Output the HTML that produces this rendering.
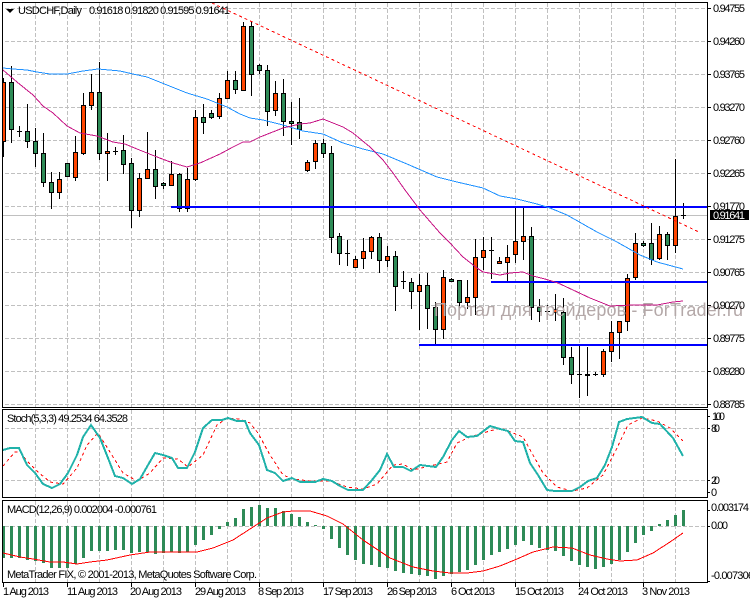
<!DOCTYPE html>
<html><head><meta charset="utf-8"><title>USDCHF,Daily</title>
<style>
html,body{margin:0;padding:0;background:#fff;width:750px;height:600px;overflow:hidden}
svg{display:block}
text{font-family:"Liberation Sans",sans-serif;font-size:11px;fill:#000}
.c{shape-rendering:crispEdges;fill:none}
</style></head><body>
<svg width="750" height="600" viewBox="0 0 750 600" xmlns="http://www.w3.org/2000/svg">
<defs>
<clipPath id="m"><rect x="3" y="3" width="704" height="404"/></clipPath>
<clipPath id="d"><rect x="3" y="501" width="704" height="81"/></clipPath>
</defs>
<rect width="750" height="600" fill="#fff"/>

<!-- grid -->
<path class="c" stroke="#c0c0c0" stroke-dasharray="4 2" d="M5 8.5H706M5 41.5H706M5 74.5H706M5 107.5H706M5 140.5H706M5 173.5H706M5 206.5H706M5 239.5H706M5 272.5H706M5 305.5H706M5 338.5H706M5 371.5H706M5 404.5H706
M35.5 3V407M67.5 3V407M99.5 3V407M131.5 3V407M163.5 3V407M195.5 3V407M227.5 3V407M259.5 3V407M291.5 3V407M323.5 3V407M355.5 3V407M387.5 3V407M419.5 3V407M451.5 3V407M483.5 3V407M515.5 3V407M547.5 3V407M579.5 3V407M611.5 3V407M643.5 3V407M675.5 3V407
M5 428.5H706M5 480.5H706
M35.5 410V497M67.5 410V497M99.5 410V497M131.5 410V497M163.5 410V497M195.5 410V497M227.5 410V497M259.5 410V497M291.5 410V497M323.5 410V497M355.5 410V497M387.5 410V497M419.5 410V497M451.5 410V497M483.5 410V497M515.5 410V497M547.5 410V497M579.5 410V497M611.5 410V497M643.5 410V497M675.5 410V497
M5 526.5H706
M35.5 501V582M67.5 501V582M99.5 501V582M131.5 501V582M163.5 501V582M195.5 501V582M227.5 501V582M259.5 501V582M291.5 501V582M323.5 501V582M355.5 501V582M387.5 501V582M419.5 501V582M451.5 501V582M483.5 501V582M515.5 501V582M547.5 501V582M579.5 501V582M611.5 501V582M643.5 501V582M675.5 501V582"/>

<!-- bid line -->
<path class="c" stroke="#c0c0c0" d="M3 215.5H707"/>

<!-- candles -->
<g clip-path="url(#m)">
<path class="c" stroke="#000" d="M3.5 78V157M11.5 66V143M19.5 126V137M27.5 104V148M35.5 128V167M43.5 133V187M51.5 172V209M59.5 172V199M67.5 163V177M75.5 136V181M83.5 93V155M91.5 74V110M99.5 62V160M107.5 133V181M115.5 147V155M123.5 135V174M131.5 158V228M139.5 173V217M147.5 132V179M155.5 150V199M163.5 182V189M171.5 161V186M179.5 173V212M187.5 168V212M195.5 110V181M203.5 104V134M211.5 110V119M219.5 93V119M227.5 71V99M235.5 71V94M243.5 22V91M251.5 22V96M259.5 64V74M267.5 65V126M275.5 81V116M283.5 79V136M291.5 102V145M299.5 98V139M307.5 160V172M315.5 140V169M323.5 139V158M331.5 146V253M339.5 233V265M347.5 240V266M355.5 256V268M363.5 238V269M371.5 236V259M379.5 233V273M387.5 246V267M395.5 251V311M403.5 271V289M411.5 278V309M419.5 274V330M427.5 273V329M435.5 302V345M443.5 270V339M451.5 278V282M459.5 280V309M467.5 280V309M475.5 239V315M483.5 237V270M491.5 237V279M499.5 257V264M507.5 245V281M515.5 206V263M523.5 207V260M531.5 227V320M539.5 299V322M547.5 305V313M555.5 294V321M563.5 298V365M571.5 347V384M579.5 344V398M587.5 347V396M595.5 372V376M603.5 349V377M611.5 321V362M619.5 321V359M627.5 274V331M635.5 233V280M643.5 241V247M651.5 223V265M659.5 226V260M667.5 232V260M675.5 159V253M683.5 203V219
M17 131.5h5M113 151.5h5M345 253.5h5M401 281.5h5M489 250.5h5M545 311.5h5M577 374.5h5M593 374.5h5M681 215.5h5"/>
<path class="c" style="fill:#ff4500" stroke="#000" d="M1.5 82.5h4v59h-4zM57.5 179.5h4v13h-4zM73.5 152.5h4v25h-4zM81.5 105.5h4v48h-4zM89.5 92.5h4v13h-4zM105.5 151.5h4v2h-4zM137.5 178.5h4v32h-4zM145.5 169.5h4v9h-4zM169.5 174.5h4v11h-4zM185.5 179.5h4v29h-4zM193.5 117.5h4v62h-4zM217.5 98.5h4v18h-4zM225.5 80.5h4v18h-4zM241.5 26.5h4v64h-4zM273.5 93.5h4v17h-4zM305.5 162.5h4v8h-4zM313.5 143.5h4v18h-4zM353.5 259.5h4v8h-4zM361.5 251.5h4v7h-4zM369.5 237.5h4v14h-4zM385.5 256.5h4v4h-4zM417.5 285.5h4v6h-4zM441.5 277.5h4v52h-4zM465.5 297.5h4v5h-4zM473.5 257.5h4v40h-4zM481.5 250.5h4v7h-4zM497.5 261.5h4v2h-4zM505.5 257.5h4v5h-4zM513.5 241.5h4v13h-4zM521.5 236.5h4v5h-4zM553.5 309.5h4v3h-4zM601.5 351.5h4v23h-4zM609.5 332.5h4v19h-4zM617.5 321.5h4v11h-4zM625.5 278.5h4v43h-4zM633.5 243.5h4v34h-4zM657.5 234.5h4v24h-4zM673.5 216.5h4v29h-4z"/>
<path class="c" style="fill:#2e8b57" stroke="#000" d="M9.5 82.5h4v47h-4zM25.5 131.5h4v10h-4zM33.5 141.5h4v12h-4zM41.5 153.5h4v29h-4zM49.5 182.5h4v10h-4zM65.5 163.5h4v13h-4zM97.5 92.5h4v61h-4zM121.5 150.5h4v14h-4zM129.5 163.5h4v47h-4zM153.5 169.5h4v17h-4zM161.5 183.5h4v2h-4zM177.5 174.5h4v34h-4zM201.5 117.5h4v5h-4zM209.5 113.5h4v4h-4zM233.5 80.5h4v9h-4zM249.5 26.5h4v48h-4zM257.5 65.5h4v5h-4zM265.5 70.5h4v41h-4zM281.5 93.5h4v28h-4zM289.5 121.5h4v2h-4zM297.5 122.5h4v7h-4zM321.5 143.5h4v10h-4zM329.5 153.5h4v84h-4zM337.5 236.5h4v17h-4zM377.5 237.5h4v23h-4zM393.5 256.5h4v30h-4zM409.5 282.5h4v9h-4zM425.5 285.5h4v23h-4zM433.5 307.5h4v22h-4zM449.5 279.5h4v2h-4zM457.5 280.5h4v22h-4zM529.5 236.5h4v71h-4zM537.5 307.5h4v4h-4zM561.5 312.5h4v45h-4zM569.5 357.5h4v17h-4zM585.5 374.5h4v1h-4zM641.5 243.5h4v2h-4zM649.5 243.5h4v16h-4zM665.5 234.5h4v11h-4z"/>
</g>

<!-- watermark -->
<text x="434" y="316" textLength="309" style="font-size:18px;fill:#b4a8a8">Портал для трейдеров - ForTrader.ru</text>

<!-- horizontal levels -->
<g class="c" style="fill:#00f">
<rect x="171" y="206" width="536" height="2"/>
<rect x="491" y="281" width="216" height="2"/>
<rect x="419" y="344" width="288" height="2"/>
</g>

<!-- moving averages -->
<polyline class="c" stroke="#1e90ff" points="3,68 13,69 27,70 37,72 50,74 67,74 83,71 98,69 120,71 133,74 147,77 167,85 187,93 207,99 227,107 240,114 250,118 263,120 283,125 303,131 323,134 343,143 363,149 383,154 407,164 437,177 457,182 483,188 500,196 517,199 537,204 550,208 567,215 597,232 617,242 640,255 657,262 683,269"/>
<polyline class="c" stroke="#c71585" points="3,70 17,82 33,95 43,106 53,113 67,126 80,133 97,136 113,142 125,144 137,149 157,157 173,163 187,167 200,163 220,154 233,147 243,142 250,142 260,137 283,128 300,124 310,123 323,119 343,127 353,133 370,147 383,160 393,173 405,190 420,210 440,233 450,243 463,257 477,268 483,272 500,275 510,273 523,272 533,276 545,279 558,283 573,290 590,298 610,306 633,305 657,305 673,302 683,301"/>
<!-- trendline -->
<line class="c" x1="212" y1="3" x2="699" y2="232" stroke="#f00" stroke-dasharray="3 3"/>

<!-- stochastic -->
<polyline class="c" stroke="#f00" stroke-dasharray="3 3" points="3,466 15,452 20,452 28,462 38,472 50,482 63,484 77,468 87,445 98,433 110,452 123,473 137,481 150,473 163,458 178,459 188,467 203,455 217,425 227,418 240,419 250,423 258,433 270,455 283,475 293,479 310,481 330,481 347,487 363,489 377,484 393,465 403,464 413,470 447,462 457,443 470,437 483,433 500,428 513,433 523,437 533,455 543,473 557,487 572,491 587,488 603,475 617,448 628,425 642,418 657,421 670,428 683,441"/>
<polyline class="c" stroke="#20b2aa" stroke-width="2" points="3,450 10,448 19,448 27,465 35,473 43,484 52,488 60,484 68,473 77,455 83,437 91,425 100,438 108,458 115,476 123,478 132,484 140,479 148,465 155,453 163,455 172,458 178,468 187,468 195,452 203,428 212,420 222,420 228,418 237,421 245,421 250,433 259,445 267,470 275,473 283,481 292,478 300,482 315,482 323,479 332,481 340,486 348,490 363,490 372,480 380,470 387,454 394,467 403,467 411,471 420,465 436,467 443,457 452,440 459,431 467,437 477,436 490,426 500,429 508,431 515,441 523,442 530,463 538,475 547,490 555,491 572,491 580,487 588,481 597,478 605,465 612,447 619,422 627,419 642,417 652,423 660,424 673,438 683,456"/>

<!-- macd histogram -->
<g clip-path="url(#d)">
<path class="c" stroke="#2e8b57" stroke-width="3" d="M3.5 526V558M11.5 526V558M19.5 526V558M27.5 526V560M35.5 526V561M43.5 526V563M51.5 526V568M59.5 526V568M67.5 526V568M75.5 526V564M83.5 526V558M91.5 526V551M99.5 526V551M107.5 526V551M115.5 526V550M123.5 526V550M131.5 526V553M139.5 526V552M147.5 526V552M155.5 526V554M163.5 526V553M171.5 526V552M179.5 526V553M187.5 526V552M195.5 526V545M203.5 526V540M211.5 526V535M219.5 526V529M227.5 526V522M235.5 526V518M243.5 526V509M251.5 526V507M259.5 526V505M267.5 526V508M275.5 526V508M283.5 526V511M291.5 526V514M299.5 526V517M307.5 526V522M315.5 526V525M323.5 526V529M331.5 526V539M339.5 526V548M347.5 526V555M355.5 526V560M363.5 526V564M371.5 526V565M379.5 526V567M387.5 526V568M395.5 526V571M403.5 526V573M411.5 526V574M419.5 526V575M427.5 526V576M435.5 526V579M443.5 526V576M451.5 526V574M459.5 526V572M467.5 526V570M475.5 526V565M483.5 526V560M491.5 526V555M499.5 526V552M507.5 526V549M515.5 526V545M523.5 526V541M531.5 526V545M539.5 526V548M547.5 526V550M555.5 526V551M563.5 526V556M571.5 526V561M579.5 526V565M587.5 526V567M595.5 526V569M603.5 526V567M611.5 526V564M619.5 526V560M627.5 526V552M635.5 526V543M643.5 526V535M651.5 526V531M659.5 526V524M667.5 526V520M675.5 526V515M683.5 526V510"/>
</g>
<polyline class="c" stroke="#f00" points="3,553 20,557 33,559 50,562 63,562 77,564 90,562 107,560 130,555 150,552 177,552 197,552 213,548 233,540 250,529 267,518 283,512 293,511 310,511 327,516 343,524 363,540 390,558 413,567 433,571 450,573 467,573 483,571 500,566 517,559 533,552 553,547 572,548 590,555 607,559 620,561 637,560 653,553 670,542 683,533"/>

<!-- frames -->
<g class="c" stroke="#000">
<rect x="2.5" y="2.5" width="705" height="405"/>
<rect x="2.5" y="409.5" width="705" height="88"/>
<rect x="2.5" y="500.5" width="705" height="82"/>
<path d="M708 8.5h3M708 41.5h3M708 74.5h3M708 107.5h3M708 140.5h3M708 173.5h3M708 206.5h3M708 239.5h3M708 272.5h3M708 305.5h3M708 338.5h3M708 371.5h3M708 404.5h3M708 416.5h2M708 428.5h2M708 480.5h2M708 492.5h2M708 510.5h2M708 526.5h2M708 581.5h2
M3.5 583v4M67.5 583v4M131.5 583v4M195.5 583v4M259.5 583v4M323.5 583v4M387.5 583v4M451.5 583v4M515.5 583v4M579.5 583v4M643.5 583v4"/>
</g>

<!-- legend -->
<path d="M6 9h8l-4 4z" fill="#000"/>
<text x="18" y="14" textLength="64">USDCHF,Daily</text>
<text x="89" y="14" textLength="141">0.91618 0.91820 0.91595 0.91641</text>

<!-- right axis -->
<text x="713" y="12" textLength="32">0.94755</text>
<text x="713" y="45" textLength="32">0.94260</text>
<text x="713" y="78" textLength="32">0.93765</text>
<text x="713" y="111" textLength="32">0.93270</text>
<text x="713" y="144" textLength="32">0.92760</text>
<text x="713" y="177" textLength="32">0.92265</text>
<text x="713" y="210" textLength="32">0.91770</text>
<text x="713" y="243" textLength="32">0.91275</text>
<text x="713" y="276" textLength="32">0.90765</text>
<text x="713" y="309" textLength="32">0.90270</text>
<text x="713" y="342" textLength="32">0.89775</text>
<text x="713" y="375" textLength="32">0.89280</text>
<text x="713" y="408" textLength="32">0.88785</text>
<rect x="710" y="210" width="39" height="10" fill="#000"/>
<text x="713" y="219" textLength="32" style="fill:#fff">0.91641</text>

<!-- stoch -->
<text x="7" y="422" textLength="121">Stoch(5,3,3) 49.2534 64.3528</text>
<text x="712" y="420" textLength="13">100</text>
<text x="711" y="432" textLength="9">80</text>
<text x="711" y="484" textLength="9">20</text>
<text x="711" y="496" textLength="5">0</text>

<!-- macd -->
<text x="7" y="513" textLength="150">MACD(12,26,9) 0.002004 -0.000761</text>
<text x="7" y="578" textLength="250">MetaTrader FIX, © 2001-2013, MetaQuotes Software Corp.</text>
<text x="711" y="511" textLength="38">0.003174</text>
<text x="711" y="529" textLength="17">0.00</text>
<text x="711" y="579" textLength="43">-0.007306</text>

<!-- dates -->
<text x="3" y="595" textLength="46">1 Aug 2013</text>
<text x="67" y="595" textLength="51">11 Aug 2013</text>
<text x="130" y="595" textLength="52">20 Aug 2013</text>
<text x="195" y="595" textLength="51">29 Aug 2013</text>
<text x="258" y="595" textLength="46">8 Sep 2013</text>
<text x="323" y="595" textLength="50">17 Sep 2013</text>
<text x="387" y="595" textLength="50">26 Sep 2013</text>
<text x="451" y="595" textLength="44">6 Oct 2013</text>
<text x="515" y="595" textLength="49">15 Oct 2013</text>
<text x="578" y="595" textLength="50">24 Oct 2013</text>
<text x="642" y="595" textLength="48">3 Nov 2013</text>
</svg>
</body></html>
